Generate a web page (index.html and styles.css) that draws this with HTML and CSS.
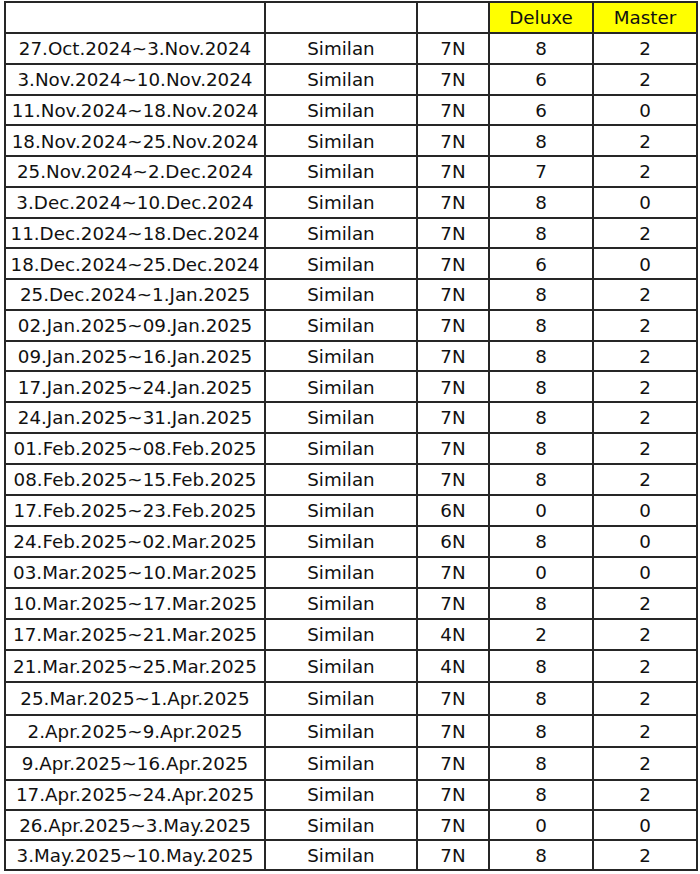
FILE: index.html
```html
<!DOCTYPE html>
<html lang="en">
<head>
<meta charset="utf-8">
<title>Similan schedule</title>
<link rel="stylesheet" href="styles.css">
</head>
<body>
<div class="sheet">
  <div class="c"></div><div class="c"></div><div class="c"></div><div class="c hd">Deluxe</div><div class="c hd">Master</div>
  <div class="c">27.Oct.2024~3.Nov.2024</div><div class="c">Similan</div><div class="c">7N</div><div class="c">8</div><div class="c">2</div>
  <div class="c">3.Nov.2024~10.Nov.2024</div><div class="c">Similan</div><div class="c">7N</div><div class="c">6</div><div class="c">2</div>
  <div class="c">11.Nov.2024~18.Nov.2024</div><div class="c">Similan</div><div class="c">7N</div><div class="c">6</div><div class="c">0</div>
  <div class="c">18.Nov.2024~25.Nov.2024</div><div class="c">Similan</div><div class="c">7N</div><div class="c">8</div><div class="c">2</div>
  <div class="c">25.Nov.2024~2.Dec.2024</div><div class="c">Similan</div><div class="c">7N</div><div class="c">7</div><div class="c">2</div>
  <div class="c">3.Dec.2024~10.Dec.2024</div><div class="c">Similan</div><div class="c">7N</div><div class="c">8</div><div class="c">0</div>
  <div class="c">11.Dec.2024~18.Dec.2024</div><div class="c">Similan</div><div class="c">7N</div><div class="c">8</div><div class="c">2</div>
  <div class="c">18.Dec.2024~25.Dec.2024</div><div class="c">Similan</div><div class="c">7N</div><div class="c">6</div><div class="c">0</div>
  <div class="c">25.Dec.2024~1.Jan.2025</div><div class="c">Similan</div><div class="c">7N</div><div class="c">8</div><div class="c">2</div>
  <div class="c">02.Jan.2025~09.Jan.2025</div><div class="c">Similan</div><div class="c">7N</div><div class="c">8</div><div class="c">2</div>
  <div class="c">09.Jan.2025~16.Jan.2025</div><div class="c">Similan</div><div class="c">7N</div><div class="c">8</div><div class="c">2</div>
  <div class="c">17.Jan.2025~24.Jan.2025</div><div class="c">Similan</div><div class="c">7N</div><div class="c">8</div><div class="c">2</div>
  <div class="c">24.Jan.2025~31.Jan.2025</div><div class="c">Similan</div><div class="c">7N</div><div class="c">8</div><div class="c">2</div>
  <div class="c">01.Feb.2025~08.Feb.2025</div><div class="c">Similan</div><div class="c">7N</div><div class="c">8</div><div class="c">2</div>
  <div class="c">08.Feb.2025~15.Feb.2025</div><div class="c">Similan</div><div class="c">7N</div><div class="c">8</div><div class="c">2</div>
  <div class="c">17.Feb.2025~23.Feb.2025</div><div class="c">Similan</div><div class="c">6N</div><div class="c">0</div><div class="c">0</div>
  <div class="c">24.Feb.2025~02.Mar.2025</div><div class="c">Similan</div><div class="c">6N</div><div class="c">8</div><div class="c">0</div>
  <div class="c">03.Mar.2025~10.Mar.2025</div><div class="c">Similan</div><div class="c">7N</div><div class="c">0</div><div class="c">0</div>
  <div class="c">10.Mar.2025~17.Mar.2025</div><div class="c">Similan</div><div class="c">7N</div><div class="c">8</div><div class="c">2</div>
  <div class="c">17.Mar.2025~21.Mar.2025</div><div class="c">Similan</div><div class="c">4N</div><div class="c">2</div><div class="c">2</div>
  <div class="c">21.Mar.2025~25.Mar.2025</div><div class="c">Similan</div><div class="c">4N</div><div class="c">8</div><div class="c">2</div>
  <div class="c">25.Mar.2025~1.Apr.2025</div><div class="c">Similan</div><div class="c">7N</div><div class="c">8</div><div class="c">2</div>
  <div class="c">2.Apr.2025~9.Apr.2025</div><div class="c">Similan</div><div class="c">7N</div><div class="c">8</div><div class="c">2</div>
  <div class="c">9.Apr.2025~16.Apr.2025</div><div class="c">Similan</div><div class="c">7N</div><div class="c">8</div><div class="c">2</div>
  <div class="c">17.Apr.2025~24.Apr.2025</div><div class="c">Similan</div><div class="c">7N</div><div class="c">8</div><div class="c">2</div>
  <div class="c">26.Apr.2025~3.May.2025</div><div class="c">Similan</div><div class="c">7N</div><div class="c">0</div><div class="c">0</div>
  <div class="c">3.May.2025~10.May.2025</div><div class="c">Similan</div><div class="c">7N</div><div class="c">8</div><div class="c">2</div>
</div>
</body>
</html>
```

FILE: styles.css
```css
html, body {
  margin: 0;
  padding: 0;
  background: #ffffff;
}

.sheet {
  display: grid;
  grid-template-columns: 258px 150px 70px 102px 102px;
  grid-template-rows: 29px repeat(13, 28.77px) repeat(7, 29px) repeat(4, 30.4px) repeat(2, 28.25px) 28px;
  gap: 2px;
  padding: 2px;
  width: max-content;
  margin: 1px 0 0 4px;
  background: #262626;
  font-family: "DejaVu Sans", "Liberation Sans", sans-serif;
  font-size: 18.3px;
  color: #111111;
}

.c {
  background: #ffffff;
  display: flex;
  align-items: center;
  justify-content: center;
  padding-top: 2px;
  white-space: nowrap;
  line-height: 1;
}

.hd {
  background: #ffff00;
}
```
